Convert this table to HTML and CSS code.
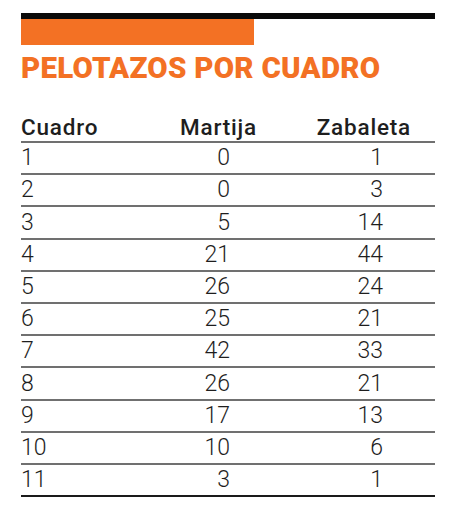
FILE: index.html
```html
<!DOCTYPE html>
<html lang="es">
<head>
<meta charset="utf-8">
<title>Pelotazos por cuadro</title>
<link rel="stylesheet" href="styles.css">
</head>
<body>
<div class="card">
  <div class="topbar"></div>
  <div class="accent"></div>
  <h1 class="title">PELOTAZOS POR CUADRO</h1>
  <div class="table">
    <div class="row head"><div class="c1">Cuadro</div><div class="c2">Martija</div><div class="c3">Zabaleta</div></div>
    <div class="row"><div class="c1">1</div><div class="c2">0</div><div class="c3">1</div></div>
    <div class="row"><div class="c1">2</div><div class="c2">0</div><div class="c3">3</div></div>
    <div class="row"><div class="c1">3</div><div class="c2">5</div><div class="c3">14</div></div>
    <div class="row"><div class="c1">4</div><div class="c2">21</div><div class="c3">44</div></div>
    <div class="row"><div class="c1">5</div><div class="c2">26</div><div class="c3">24</div></div>
    <div class="row"><div class="c1">6</div><div class="c2">25</div><div class="c3">21</div></div>
    <div class="row"><div class="c1">7</div><div class="c2">42</div><div class="c3">33</div></div>
    <div class="row"><div class="c1">8</div><div class="c2">26</div><div class="c3">21</div></div>
    <div class="row"><div class="c1">9</div><div class="c2">17</div><div class="c3">13</div></div>
    <div class="row"><div class="c1">10</div><div class="c2">10</div><div class="c3">6</div></div>
    <div class="row last"><div class="c1">11</div><div class="c2">3</div><div class="c3">1</div></div>
  </div>
</div>
</body>
</html>
```
FILE: styles.css
```css
html, body {
  margin: 0;
  padding: 0;
  background: #ffffff;
}
.card {
  margin: 13px 0 0 21px;
  width: 414px;
  font-family: Roboto, "Liberation Sans", sans-serif;
  color: #1e1e1e;
}
.topbar {
  height: 6px;
  background: #0a0a0a;
}
.accent {
  width: 233px;
  height: 26px;
  background: #f37124;
}
.title {
  margin: 0;
  padding-top: 5px;
  height: 42px;
  font-size: 29.5px;
  line-height: 36px;
  font-weight: 900;
  letter-spacing: 0.25px;
  color: #f37124;
  white-space: nowrap;
}
.table {
  margin-top: 21px;
}
.row {
  display: grid;
  grid-template-columns: 140px 115px 159px;
  height: 30.2px;
  border-bottom: 2px solid #707070;
  font-size: 23px;
  font-weight: 300;
  line-height: 30px;
  align-items: end;
}
.row.head {
  height: 28px;
  font-weight: 500;
  font-size: 22.5px;
  letter-spacing: 0.8px;
  line-height: 29px;
}
.row.last {
  border-bottom-color: #1a1a1a;
}
.c1 {
  text-align: left;
}
.c2 {
  text-align: right;
  padding-right: 46px;
}
.c3 {
  text-align: right;
  padding-right: 52px;
}
.head .c2 {
  padding-right: 19px;
}
.head .c3 {
  padding-right: 24px;
}
```
